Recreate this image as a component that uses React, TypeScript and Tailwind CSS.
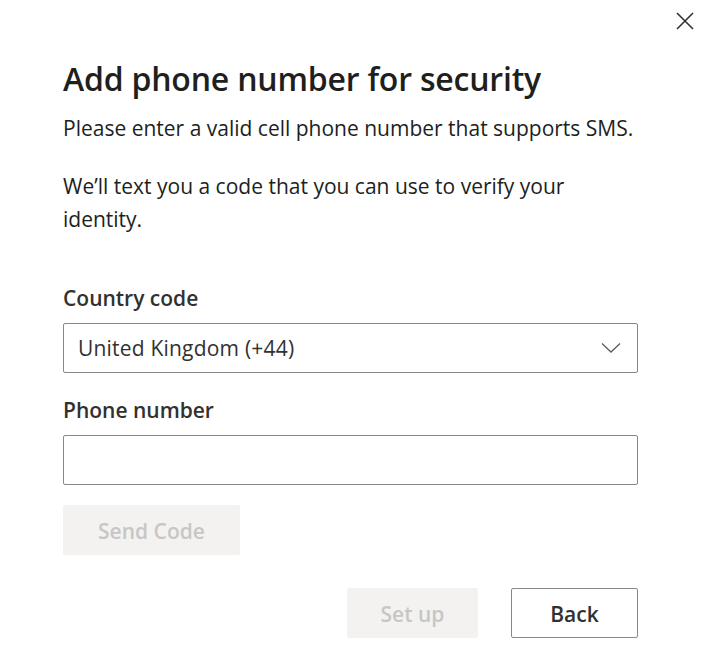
import { useState } from "react";

const font = { fontFamily: '"Open Sans", "Noto Sans", sans-serif' };

function CloseIcon() {
  return (
    <svg width="18" height="18" viewBox="0 0 18 18" aria-hidden="true">
      <path d="M1 1 L17 17 M17 1 L1 17" stroke="#323130" strokeWidth="1.6" fill="none" />
    </svg>
  );
}

function Chevron() {
  return (
    <svg width="20" height="12" viewBox="0 0 20 12" aria-hidden="true">
      <path d="M1 1.5 L10 10 L19 1.5" stroke="#605e5c" strokeWidth="1.3" fill="none" />
    </svg>
  );
}

export default function App() {
  const [phone, setPhone] = useState("");

  return (
    <div className="relative h-[656px] w-[706px] bg-white text-[#201f1e]" style={font}>
      <button className="absolute right-[12px] top-[12px] flex h-[18px] w-[18px] items-center justify-center">
        <CloseIcon />
      </button>

      <div className="flex flex-col pl-[63px] pr-[68px] pt-[56px]">
        <h1 className="text-[32px] font-semibold leading-[46px] tracking-[-0.2px]">
          Add phone number for security
        </h1>
        <p className="mt-[10px] whitespace-nowrap text-[21px] leading-[32px]">
          Please enter a valid cell phone number that supports SMS.
        </p>
        <p className="mt-[26px] text-[21px] leading-[33px]">
          We’ll text you a code that you can use to verify your identity.
        </p>

        <label className="mt-[47px] text-[21px] font-semibold leading-[30px] text-[#323130]">
          Country code
        </label>
        <div className="mt-[10px] flex h-[50px] items-center justify-between rounded-[2px] border border-[#8a8886] pl-[14px] pr-[16px]">
          <span className="pt-[2px] text-[21px] text-[#323130] tracking-[0.2px]">United Kingdom (+44)</span>
          <Chevron />
        </div>

        <label className="mt-[22px] text-[21px] font-semibold leading-[30px] text-[#323130]">
          Phone number
        </label>
        <input
          value={phone}
          onChange={(e) => setPhone(e.target.value)}
          className="mt-[10px] h-[50px] rounded-[2px] border border-[#8a8886] px-[14px] text-[21px] outline-none"
        />

        <button className="mt-[20px] h-[50px] w-[177px] rounded-[2px] bg-[#f3f2f1] pt-[3px] text-[21px] font-semibold text-[#c8c6c4]">
          Send Code
        </button>

        <div className="mt-[33px] flex justify-end gap-[33px]">
          <button className="h-[50px] w-[131px] rounded-[2px] bg-[#f3f2f1] pt-[4px] text-[21px] font-semibold text-[#c8c6c4]">
            Set up
          </button>
          <button className="h-[50px] w-[127px] rounded-[2px] border border-[#8a8886] bg-white pt-[4px] text-[21px] font-semibold text-[#323130]">
            Back
          </button>
        </div>
      </div>
    </div>
  );
}
